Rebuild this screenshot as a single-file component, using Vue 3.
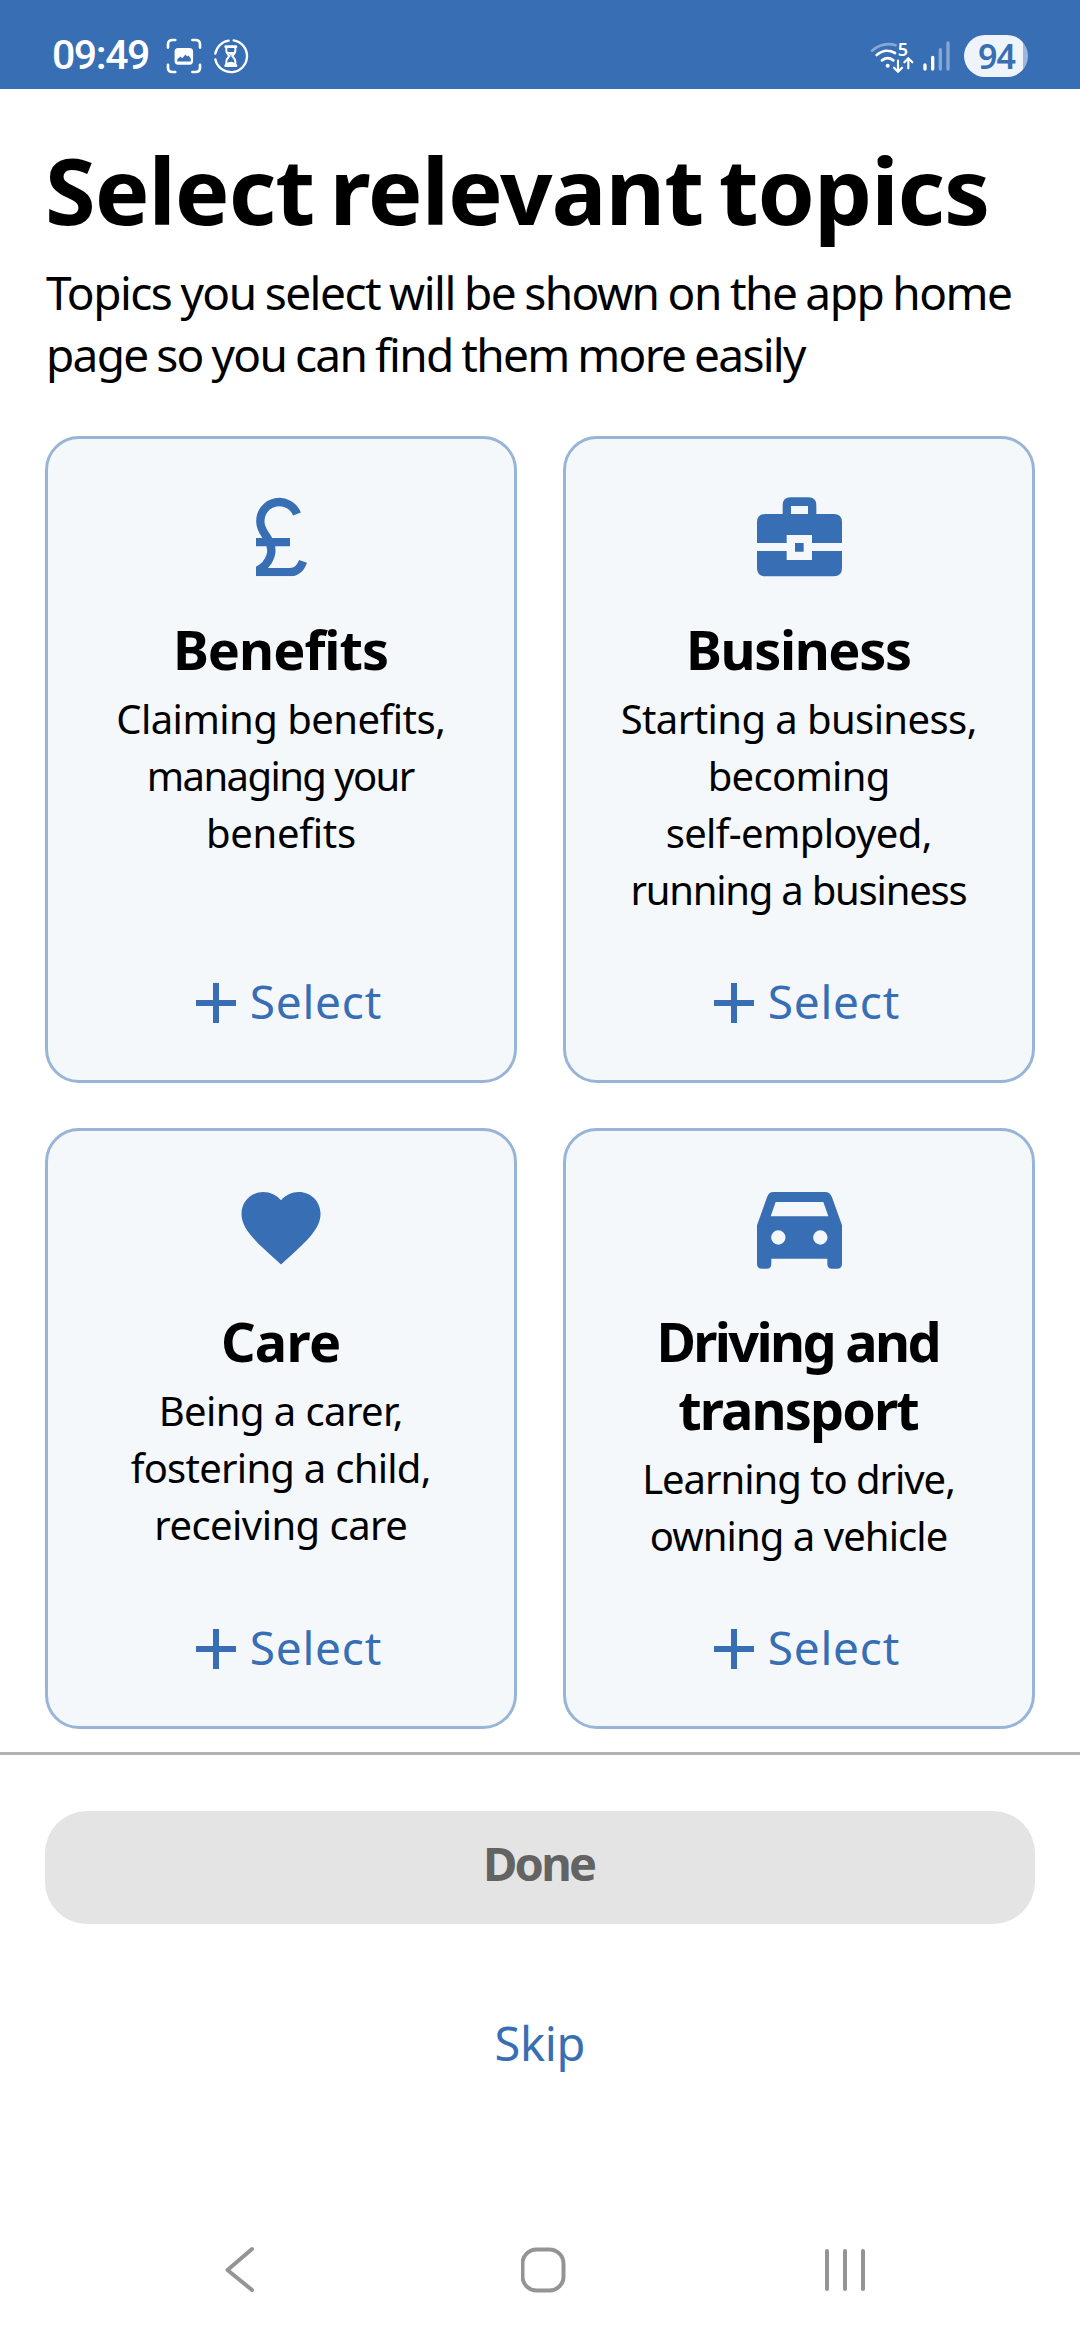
<script setup>
import { nextTick } from 'vue'

const topics = [
  {
    icon: 'pound',
    title: [['Benefits', 210]],
    lines: [['Claiming benefits,', 325], ['managing your', 265], ['benefits', 146]],
  },
  {
    icon: 'briefcase',
    title: [['Business', 220]],
    lines: [['Starting a business,', 352], ['becoming', 177], ['self-employed,', 262], ['running a business', 333]],
  },
  {
    icon: 'heart',
    title: [['Care', 116]],
    lines: [['Being a carer,', 239], ['fostering a child,', 298], ['receiving care', 249]],
  },
  {
    icon: 'car',
    title: [['Driving and', 278], ['transport', 239]],
    lines: [['Learning to drive,', 308], ['owning a vehicle', 295]],
  },
]

// Tracks a line of text so that its inked width equals the given number of pixels.
const vFit = {
  mounted(el, { value }) {
    nextTick(() => {
      const cs = getComputedStyle(el)
      const ctx = document.createElement('canvas').getContext('2d')
      ctx.font = `${cs.fontWeight} ${cs.fontSize} ${cs.fontFamily}`
      const text = el.textContent.trim()
      const m = ctx.measureText(text)
      const gaps = text.split(' ').length - 1
      const ink = m.actualBoundingBoxRight + m.actualBoundingBoxLeft + gaps * (parseFloat(cs.wordSpacing) || 0)
      const spacing = (value - ink) / (text.length - 1)
      el.style.letterSpacing = `${spacing}px`
      el.style.marginRight = `${-spacing}px`
    })
  },
}
</script>

<template>
  <div class="screen">
    <header class="status">
      <span class="time" v-fit="94">09:49</span>
      <svg class="capture" viewBox="406 84 109 109" fill="none" stroke="#fff" stroke-width="8" stroke-linecap="round">
        <path d="M412 113V104Q412 90 426 90H434M486 90H495Q509 90 509 104V113M509 165V174Q509 187 495 187H486M434 187H426Q412 187 412 174V165" />
        <rect x="432" y="114" width="56" height="51" rx="11" fill="#fff" stroke="none" />
        <path d="M440 155V148L450 140L455 145L465 134L470 140L474 137L481 146V155Z" fill="#386eb4" stroke="none" />
      </svg>
      <svg class="hourglass" viewBox="548 84 108 108" fill="none" stroke="#fff" stroke-width="7" stroke-linecap="round">
        <path d="M610 91A48 48 0 1 1 555 148M555 131A48 48 0 0 1 595 92" />
        <path d="M586 110H617M586 167H617" stroke-width="8" />
        <path d="M588 111V122Q588 128 597 138Q588 148 588 155V166H615V155Q615 148 606 138Q615 128 615 122V111Z" stroke-width="6" />
        <path d="M590 126H613L602 137ZM588 166V160Q602 150 615 160V166Z" fill="#fff" stroke="none" />
      </svg>
      <span class="spacer"></span>
      <svg class="signal" viewBox="60 86 246 102" fill="none" stroke="#fff" stroke-width="8" stroke-linecap="round">
        <path d="M66 121Q100 93 137 105" opacity=".4" />
        <path d="M80 134Q106 112 135 128" />
        <path d="M96 150Q113 137 130 150" />
        <circle cx="113" cy="166" r="6" fill="#fff" stroke="none" />
        <path d="M144 151V183M132 172L144 184L156 172M175 174V145M163 156L175 144L187 156" stroke-width="6.5" />
        <text x="143" y="136" class="band">5</text>
        <path d="M225 164V176M248 141V176" stroke-width="10" />
        <path d="M271 118V176M294 98V176" stroke-width="10" opacity=".4" />
      </svg>
      <span class="battery">94</span>
    </header>

    <main class="content">
      <h1><span class="fit" v-fit="938">Select relevant topics</span></h1>
      <p class="intro">
        <span class="fit" v-fit="965">Topics you select will be shown on the app home</span><br />
        <span class="fit" v-fit="758">page so you can find them more easily</span>
      </p>

      <div class="grid">
        <article v-for="topic in topics" :key="topic.icon" class="card">
          <svg v-if="topic.icon === 'pound'" class="icon" viewBox="-12 51 270 240">
            <clipPath id="pound-edge"><path d="M48 40H210V289H48Z" /></clipPath>
            <g clip-path="url(#pound-edge)" fill="none" stroke="currentColor" stroke-width="25">
              <path d="M171 102A57 57 0 0 0 61 124C61 150 75 160 84 177C94 195 97 212 91 229C85 249 70 264 44 277" />
              <path d="M48 186.500H150M48 276.500H150Q178 276 189 244" />
            </g>
          </svg>
          <svg v-else-if="topic.icon === 'briefcase'" class="icon" viewBox="-3 51 360 240" fill="currentColor">
            <path fill-rule="evenodd" d="M128 102V76Q128 52 152 52H205Q229 52 229 76V102H281Q306 102 306 127V189H216V165H140V189H51V127Q51 102 76 102ZM153 78V102H204V78Z" />
            <path d="M51 213H140V240H216V213H306V264Q306 289 281 289H76Q51 289 51 264ZM165 189H191V215H165Z" />
          </svg>
          <svg v-else-if="topic.icon === 'heart'" class="icon" viewBox="1.87 2.24 20.25 20.25" fill="currentColor">
            <path d="M12 21.35l-1.450-1.320C5.400 15.360 2 12.280 2 8.500 2 5.420 4.420 3 7.500 3c1.740 0 3.410.810 4.500 2.090C13.090 3.810 14.760 3 16.500 3 19.580 3 22 5.420 22 8.500c0 3.780-3.400 6.860-8.550 11.540L12 21.350z" />
          </svg>
          <svg v-else class="icon" viewBox="-3 42 360 240" fill="currentColor">
            <path fill-rule="evenodd" d="M100 51H255Q270 51 276 67L306 151V266Q306 281 291 281H276Q262 281 262 266V251H94V266Q94 281 80 281H66Q51 281 51 266V151L81 67Q86 51 100 51ZM107 81L92 124H265L250 81ZM115 166A21.500 21.500 0 1 0 115 209A21.500 21.500 0 1 0 115 166ZM241 166A21.500 21.500 0 1 0 241 209A21.500 21.500 0 1 0 241 166Z" />
          </svg>
          <h2>
            <span v-for="[text, width] in topic.title" :key="text" class="line"><span class="fit" v-fit="width">{{ text }}</span></span>
          </h2>
          <p>
            <span v-for="[text, width] in topic.lines" :key="text" class="line"><span class="fit" v-fit="width">{{ text }}</span></span>
          </p>
          <button class="select">
            <svg viewBox="0 0 40 40" stroke="currentColor" stroke-width="6"><path d="M0 20H40M20 0V40" /></svg>
            <span class="fit" v-fit="129">Select</span>
          </button>
        </article>
      </div>
    </main>

    <footer class="footer">
      <button class="done"><span class="fit" v-fit="108">Done</span></button>
      <button class="skip"><span class="fit" v-fit="87">Skip</span></button>
    </footer>

    <nav class="nav">
      <svg viewBox="0 0 50 50"><path d="M31 5L6.500 26L31 46" /></svg>
      <svg viewBox="3 0 50 50"><rect x="4.500" y="5.500" width="41" height="41" rx="14" /></svg>
      <svg viewBox="0 0 50 50"><path d="M7 7V45M25 7V45M43 7V45" /></svg>
    </nav>
  </div>
</template>

<style>
body {
  margin: 0;
  background: #fff;
}
</style>

<style scoped>
.screen {
  --blue: #386eb4;
  display: flex;
  flex-direction: column;
  width: 1080px;
  height: 2340px;
  overflow: hidden;
  background: #fff;
  color: #000;
  font-family: "Noto Sans", "Open Sans", sans-serif;
}

h1,
h2,
p {
  margin: 0;
}

button {
  padding: 0;
  border: 0;
  background: none;
  font: inherit;
  color: var(--blue);
}

.fit {
  display: inline-block;
  white-space: nowrap;
}

.status {
  display: flex;
  align-items: center;
  box-sizing: border-box;
  flex: none;
  height: 89px;
  padding: 23px 52px 0 52px;
  background: var(--blue);
  color: #fff;
}

.time {
  width: 98px;
  white-space: nowrap;
  font-family: Roboto, "Noto Sans", sans-serif;
  font-size: 41px;
  font-weight: 500;
  line-height: 50px;
  margin-top: -2px;
}

.capture {
  width: 36px;
  height: 36px;
  margin-left: 15px;
}

.hourglass {
  width: 36px;
  height: 36px;
  margin-left: 11px;
}

.spacer {
  flex: 1;
}

.signal {
  width: 82px;
  height: 34px;
  margin-right: 12px;
  overflow: visible;
}

.band {
  fill: #fff;
  stroke: none;
  font-size: 54px;
  font-weight: 600;
}

.battery {
  box-sizing: border-box;
  width: 64px;
  height: 42px;
  padding-left: 14px;
  border-radius: 21px;
  background: linear-gradient(to right, #eff4fa 59px, #9bb7dc 59px);
  color: var(--blue);
  font-size: 34px;
  font-weight: 600;
  line-height: 43px;
  letter-spacing: -1px;
}

.content {
  flex: none;
  box-sizing: border-box;
  height: 1663px;
  padding: 51px 45px 0;
}

h1 {
  font-size: 92px;
  font-weight: 700;
  line-height: 100px;
}

h1 .fit {
  word-spacing: -0.08em;
}

.intro {
  margin-top: 21px;
  padding-left: 1px;
  font-size: 46px;
  line-height: 62px;
}

.intro .fit {
  word-spacing: -0.03em;
}

.grid {
  display: grid;
  grid-template-columns: 472px 472px;
  grid-template-rows: 647px 601px;
  gap: 45px 46px;
  margin-top: 51px;
}

.card {
  display: flex;
  flex-direction: column;
  align-items: center;
  box-sizing: border-box;
  padding: 58px 0 49px;
  border: 3px solid #98b5d8;
  border-radius: 34px;
  background: #f4f8fb;
  text-align: center;
}

.icon {
  height: 80px;
  color: var(--blue);
}

.line {
  display: block;
}

h2 {
  margin-top: 38px;
  font-size: 54px;
  font-weight: 700;
  line-height: 68px;
}

.card p {
  margin-top: 7px;
  font-size: 40px;
  line-height: 57px;
}

.select {
  display: flex;
  align-items: center;
  gap: 14px;
  margin-top: auto;
  padding-left: 15px;
  font-size: 46px;
  line-height: 60px;
}

.select svg {
  width: 40px;
  height: 40px;
  margin-top: 3px;
}

.footer {
  display: flex;
  flex-direction: column;
  align-items: center;
  flex: none;
  padding: 56px 45px 0;
  border-top: 3px solid #b2b2b2;
}

.done {
  width: 100%;
  height: 113px;
  padding-bottom: 9px;
  border-radius: 42px;
  background: #e4e4e4;
  color: #636363;
  font-size: 47px;
  font-weight: 700;
}

.skip {
  margin-top: 89px;
  font-size: 47px;
  line-height: 60px;
}

.nav {
  display: flex;
  justify-content: space-between;
  margin-top: auto;
  padding: 0 210px 46px 221px;
}

.nav svg {
  width: 50px;
  height: 50px;
  fill: none;
  stroke: #949494;
  stroke-width: 4;
  stroke-linecap: round;
  stroke-linejoin: round;
}
</style>
